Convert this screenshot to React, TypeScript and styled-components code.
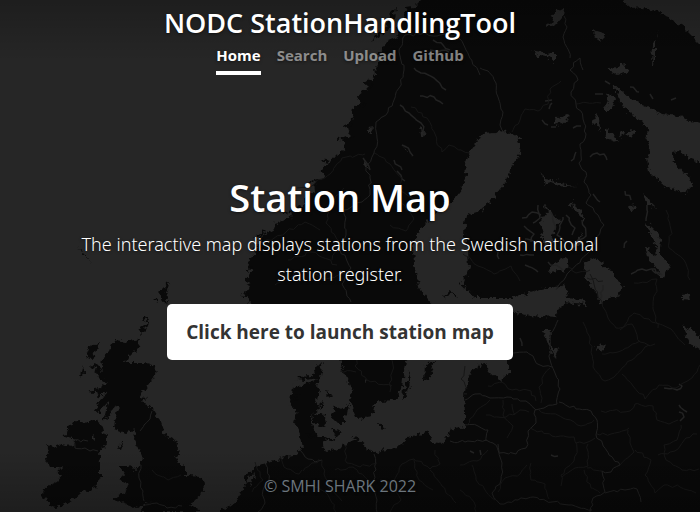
import React from "react";
import styled, { createGlobalStyle } from "styled-components";

const GlobalStyle = createGlobalStyle`
  *, *::before, *::after { box-sizing: border-box; }
  body {
    margin: 0;
    background: #262626;
    color: #fff;
    font-family: "Segoe UI", "Open Sans", "Noto Sans", sans-serif;
  }
`;

const Page = styled.div`
  position: relative;
  min-height: 100vh;
  display: flex;
  overflow: hidden;
  text-align: center;
  text-shadow: 0 1px 3px rgba(0, 0, 0, 0.5);
`;

const Backdrop = styled.svg`
  position: absolute;
  inset: 0;
  width: 100%;
  height: 100%;
`;

const Cover = styled.div`
  position: relative;
  flex: 1;
  display: flex;
  flex-direction: column;
  justify-content: space-between;
  align-items: center;
  padding: 4px 36px 14px 16px;
`;

const Header = styled.header`
  display: flex;
  flex-direction: column;
  align-items: center;
`;

const Brand = styled.h3`
  margin: 0;
  font-size: 27px;
  font-weight: 600;
  line-height: 38px;
`;

const Nav = styled.nav`
  display: flex;
  gap: 16px;
`;

const NavLink = styled.a<{ $active?: boolean }>`
  padding: 1px 0 4px;
  border-bottom: 4px solid ${(p) => (p.$active ? "#fff" : "transparent")};
  color: ${(p) => (p.$active ? "#fff" : "rgba(255, 255, 255, 0.5)")};
  font-size: 15px;
  font-weight: 700;
  line-height: 24px;
  text-decoration: none;
`;

const Main = styled.main`
  max-width: 560px;
  padding-bottom: 16px;
`;

const Title = styled.h1`
  margin: 0 0 8px;
  font-size: 38px;
  font-weight: 600;
  line-height: 48px;
`;

const Lead = styled.p`
  margin: 0 0 15px;
  font-family: "Segoe UI", "Noto Sans", sans-serif;
  font-size: 18px;
  font-weight: 300;
  line-height: 30px;
`;

const LaunchLink = styled.a`
  display: inline-block;
  padding: 13px 19px;
  border-radius: 5px;
  background: #fff;
  color: #333;
  font-size: 19px;
  font-weight: 700;
  line-height: 30px;
  text-decoration: none;
  text-shadow: none;
`;

const Footer = styled.footer`
  color: #6c757d;
  font-size: 16px;
  line-height: 24px;
`;

const landShapes = [
  // Scandinavia, Russia and the continent
  "M421 0L414 7 406 8 403 18 396 29 398 36 388 40 385 48 378 53 382 60 374 68 375 76 365 83 366 90 358 96 360 103 351 111 354 118 347 124 350 134 343 140 346 149 336 156 331 162 321 168 324 176 314 183 315 192 304 197 304 205 293 210 290 218 276 223 274 229 260 237 263 243 251 248 256 255 246 262 252 270 246 280 250 287 246 295 252 306 258 330 272 346 288 340 304 316 320 308 330 334 340 360 346 378 353 392 349 400 355 415 358 419 371 417 374 409 373 405 380 401 395 400 402 388 404 370 408 350 430 335 430 303 420 290 414 265 413 245 420 230 436 214 452 201 462 188 466 175 465 163 472 148 482 134 495 133 504 130 518 137 521 145 520 154 512 166 506 182 494 196 486 207 476 212 466 215 464 234 468 250 469 268 463 284 475 298 511 298 530 293 548 288 562 286 566 284 568 297 584 300 587 305 574 304 564 303 560 307 555 318 530 316 512 312 490 326 490 345 509 352 509 372 499 381 490 373 484 362 472 370 467 380 464 396 465 412 465 427 455 429 450 430 448 438 440 443 433 442 428 432 408 438 402 445 375 453 368 449 358 440 344 445 331 452 321 447 328 437 317 437 313 428 311 416 320 408 316 399 321 391 317 386 320 377 323 361 316 368 311 376 299 377 292 385 290 403 297 411 294 422 300 435 302 448 295 456 286 457 275 461 263 464 254 468 246 474 243 490 235 502 221 512H700V0Z",
  // Great Britain
  "M115 340L125 342 140 339 138 347 128 357 125 363 145 363 156 366 155 375 148 385 140 397 146 398 142 402 147 404 154 410 159 418 165 435 175 440 180 455 174 457 185 468 185 478 190 475 200 476 205 484 202 494 195 500 189 507 200 510 200 512 141 512 144 506 150 501 137 508 126 504 112 499 117 495 126 493 129 484 119 479 125 475 120 467 127 467 134 469 141 465 143 457 139 448 134 439 136 429 125 433 114 429 115 421 119 408 113 405 108 420 104 419 108 402 98 413 94 411 103 397 108 390 97 397 96 391 108 383 98 377 95 369 91 365 95 363 102 370 103 358 109 351 112 344Z",
  // Ireland
  "M46 444L52 448 61 444 72 446 76 440 66 437 65 432 70 425 80 420 87 422 95 421 101 425 103 432 107 437 105 447 99 451 100 465 100 478 95 488 90 490 80 494 69 502 57 507 51 506 48 502 42 496 43 489 50 485 57 482 63 475 55 475 61 468 50 468 46 459 48 452Z",
  // Hebrides, Orkney, Shetland, Man and Faroes
  "M98 343L89 348 86 356 92 359 95 352ZM83 364L80 376 84 374ZM170 280L163 288 159 292 164 304 168 289ZM148 324L137 330 141 334 146 329ZM123 441L117 448 120 449ZM78 247L88 259 92 264 84 256ZM90 390L99 388 92 394Z",
  // Lofoten
  "M396 8L389 15 388 24 377 34 372 40 379 36 392 26Z",
  // Danish islands, Bornholm, Oland and Gotland
  "M312 415L324 413 326 424 320 427 313 421ZM349 404L348 414 343 418 346 424 338 424 331 417 335 406 341 409ZM331 428L344 432 336 437ZM378 421L385 427 382 429 378 425ZM411 371L401 398 404 399 410 383ZM435 360L425 365 424 381 429 380 432 371Z",
];

const waterShapes = [
  // Barents Sea
  "M622 0L631 8 642 7 653 11 663 14 672 20 684 28 691 35 700 44 712 52V-10H622Z",
  // White Sea
  "M613 85L621 90 630 98 643 105 654 109 662 114 679 116 690 121 712 124V166L690 159 680 151 672 152 674 161 681 171 689 176 692 186 685 194 675 190 662 184 656 177 649 172 647 160 650 148 646 139 649 132 642 122 632 115 623 106Z",
  // Kola and Karelian lakes
  "M606 93L616 98 612 110 602 110 608 103ZM597 112L593 123 600 131 599 118ZM605 129L612 133 619 143 606 138ZM621 131L625 130 624 135 619 137ZM632 130L635 132 631 137 626 134Z",
  // Inari and Lapland lakes
  "M564 8L563 17 555 26 546 28 552 19 554 13ZM532 51L547 54 555 52 555 62 548 57 539 56ZM593 30L606 34 598 42ZM659 29L653 45 652 66 655 60 655 43ZM606 68L626 64 628 71 618 75 611 72ZM555 120L568 114 571 117 561 123 555 125Z",
  "M542 172L546 179 558 181 565 185 578 186 562 187 551 182 544 184ZM540 222L547 213 544 203 552 214 560 220 555 229 551 241 545 247ZM570 205L585 222 582 211 575 204ZM554 262L566 257 568 269 560 271 548 272ZM582 232L580 247 572 249 575 242ZM570 202L573 200 574 209 568 207ZM642 193L650 200 655 208 648 205ZM628 206L637 205 632 212Z",
  // Ladoga
  "M595 257L601 262 611 271 619 282 623 287 618 297 609 298 602 305 599 304 598 294 588 283 585 272 584 263Z",
  // Onega
  "M645 222L654 230 661 239 660 250 664 259 670 265 664 278 660 278 658 267 649 262 645 245 651 253 657 257 655 245Z",
  // Peipus, Ilmen and Rybinsk
  "M543 330L551 330 550 342 553 348 559 350 555 358 550 350ZM597 344L606 346 602 351 595 349ZM682 325L694 331 700 338V350L690 343ZM681 295L690 294 691 300 681 299Z",
  // Norwegian and Swedish lakes
  "M367 129L374 128 370 134ZM420 126L426 136 421 137ZM402 144L411 154 405 149ZM364 159L369 172 364 165Z",
  "M291 383L297 379 306 380 317 378 314 381 304 384 294 389ZM367 379L365 384 364 381ZM248 477L256 471 252 482 245 485ZM94 435L97 438 93 441Z",
];

const nationalBorders = [
  "M480 68L488 71 496 83 498 97 503 112 500 125 505 133",
  "M578 80L571 92 576 104 583 119 586 134 580 144 581 155 579 163 586 172 584 182 591 195 586 203 598 215 604 225 595 240 587 254 567 274 556 290",
  "M578 80L570 70 580 58 583 70M570 58L563 37 567 27 564 16",
  "M480 75L466 50 459 38 447 33 437 36 427 34 405 35 399 52 404 70 399 88 388 112 376 122 377 138 374 153 366 168 370 178 370 195 362 202 344 210 346 235 340 249 351 268 342 284 351 302",
  "M558 320L550 337 550 360 555 373 560 389 557 404 544 408 535 410 536 423 528 431 526 448 516 454 499 453 493 443 486 440 465 442 450 441",
  "M465 425L478 426 488 430 486 441M465 400L475 394 490 398 507 397 513 399 526 401 536 410M559 402L576 409 591 411 597 420 596 435 609 455 620 465 611 472 602 471 605 492 593 498 590 512",
  "M513 353L527 352 540 365 552 367M498 444L502 463 501 480 492 493 500 504 518 500 533 497 552 502 569 505 592 510M605 493L625 490 637 489 641 502",
  "M374 454L376 470 371 484 377 500 377 512M300 450L308 459 315 462 322 460M266 465L269 480 263 490 265 503 258 512",
  "M152 411L150 419 144 425 140 431M88 441L73 440 75 448 85 448 90 451 98 451M141 465L139 478 143 491 144 501M145 505L157 503 167 508 182 506",
];

const regionalBorders = [
  "M576 104L601 103M512 132L520 120 525 109 538 111 548 104 550 89 561 81",
  "M411 107L427 118 442 152 449 145 461 150 470 153M374 153L390 164 402 178 401 191 416 202M365 154L342 158 330 174 312 186 297 188M344 188L332 202 326 223 339 241 332 260",
  "M390 225L406 231 414 219 401 203M264 242L286 232 305 222 320 230M275 285L302 270 326 279 347 271M288 260L312 252 337 265",
  "M488 386L502 382 512 390 531 391 536 401M486 415L506 417 520 410 529 412M490 400L477 410 467 425M503 400L503 415 513 426 507 438M515 415L512 404M539 410L563 418 581 426 594 420",
  "M550 368L539 387 541 403M583 322L590 340 593 367 605 381 614 377 622 368 632 360 645 347 655 344M622 374L633 386 645 399 659 385 676 388 689 380 700 365M601 411L630 411 635 404 653 406 657 420 669 424 678 420M628 430L630 443 634 452 620 465M597 434L611 434 629 428M635 450L651 460 645 475 655 493 664 485 680 487 696 493",
  "M658 455L675 451 686 438 697 434M681 425L677 440 664 445 666 460 682 470 699 469M530 428L552 436 574 437 577 448 574 461 561 475 561 486M531 463L531 480 545 484 549 499M498 492L505 478 520 474 527 465M587 468L602 471M584 470L591 488 600 493",
  "M576 443L588 442 595 438M588 444L588 466 575 468 562 477M460 465L477 461 488 450M472 465L476 480 485 490 495 500M460 490L474 502 476 512",
  "M590 274L608 318 616 328 632 324 640 342 650 346M587 278L603 281M634 283L657 279 653 309 658 328M666 210L671 230 669 248 684 260 690 280",
  "M620 330L634 313 649 319 671 329 685 345",
  "M255 462L263 480 252 492M280 456L284 467 299 474 302 470M303 471L319 459M322 460L324 474 330 489 342 501M345 445L347 463 360 467 377 463M312 484L328 495 336 512M380 480L393 482 402 464 414 459 430 469 440 464 435 450M430 470L442 486 456 503M414 460L419 480 433 490M392 482L401 500 390 512M335 470L353 467 372 482M360 348L355 366 367 380 392 386M356 372L340 371M380 340L393 365 390 392M465 366L461 379 467 389",
  "M152 470L168 480 181 475",
  "M590 270L576 273 568 267M463 254L478 266 494 274 511 266 520 281M602 354L618 352 640 341",
];

const fineLakes = [
  "M414 68L421 73 434 78 446 90M420 96L434 97 443 104M400 105L409 113 421 123 426 134M402 145L410 152 413 156M433 40L443 45 450 50M430 50L449 52M397 171L405 181M394 160L402 170M363 158L370 170",
  "M522 218L532 212 541 215M525 239L535 243M524 226L534 234 531 242M538 205L540 218 533 223M548 242L561 241M551 212L555 230M563 217L557 235 565 242M548 262L563 270M566 215L575 228 572 235M582 220L586 236 577 243M520 255L534 255M498 252L499 259M525 265L538 272",
  "M545 101L552 100M549 109L552 103M551 127L556 127M542 120L548 125M573 128L581 126M571 161L576 152M590 157L597 153 604 154 607 160M593 194L600 202M625 191L631 200M610 84L605 81M595 94L603 94M650 94L653 99M671 100L676 98M630 87L639 92M631 274L642 269 655 269 659 275M652 270L662 275M646 221L647 205",
  "M664 388L677 390 682 386 679 384M679 405L687 412M679 412L684 417 680 421M551 455L558 456M470 451L474 453M480 450L481 455M520 338L522 346M627 241L624 248M603 285L600 300",
];

const coastlineIslands = "M393 56L388 59M373 85L368 88M365 104L357 108M353 136L341 140M340 137L337 140M351 124L343 127M329 162L321 160M316 179L307 185M293 211L283 213M266 231L256 238M253 267L246 270M248 294L242 297M144 317L149 324M154 299L158 302M164 303L169 300M445 298L451 291 458 297M474 291L480 295M460 284L464 288M300 393L294 400M325 438L336 440M353 437L359 440M327 391L331 398M323 403L319 406M315 437L306 434";

// Splits each straight run into short, gently wavering segments.
function meander(path: string): string {
  let seed = 11;
  const wobble = () => {
    seed = (seed * 16807) % 2147483647;
    return (seed / 2147483647 - 0.5) * 3;
  };
  return path
    .split("M")
    .filter(Boolean)
    .map((line) => {
      const n = line.replace(/L/g, " ").trim().split(/\s+/).map(Number);
      let out = `M${n[0]} ${n[1]}`;
      for (let i = 2; i < n.length; i += 2) {
        const dx = n[i] - n[i - 2];
        const dy = n[i + 1] - n[i - 1];
        const steps = Math.max(1, Math.round(Math.hypot(dx, dy) / 4));
        for (let k = 1; k < steps; k++) {
          const x = n[i - 2] + (dx * k) / steps + wobble();
          const y = n[i - 1] + (dy * k) / steps + wobble();
          out += `L${x.toFixed(1)} ${y.toFixed(1)}`;
        }
        out += `L${n[i]} ${n[i + 1]}`;
      }
      return out;
    })
    .join("");
}

const nationalLines = meander(nationalBorders.join(""));
const regionalLines = meander(regionalBorders.join(""));
const lakeLines = meander(fineLakes.join(""));

function EuropeMap() {
  return (
    <Backdrop viewBox="0 0 700 512" preserveAspectRatio="xMidYMid slice" aria-hidden="true">
      <defs>
        <filter
          id="coast"
          x="-10"
          y="-10"
          width="720"
          height="532"
          filterUnits="userSpaceOnUse"
          colorInterpolationFilters="sRGB"
        >
          <feTurbulence type="fractalNoise" baseFrequency="0.2" numOctaves="3" seed="7" result="noise" />
          <feDisplacementMap in="SourceGraphic" in2="noise" scale="8" xChannelSelector="R" yChannelSelector="G" />
          <feGaussianBlur stdDeviation="0.4" />
        </filter>
        <linearGradient id="shade" x1="0" y1="0" x2="0" y2="1">
          <stop offset="0" stopColor="#000" stopOpacity="0.22" />
          <stop offset="0.12" stopColor="#000" stopOpacity="0" />
          <stop offset="0.88" stopColor="#000" stopOpacity="0" />
          <stop offset="1" stopColor="#000" stopOpacity="0.22" />
        </linearGradient>
      </defs>
      <rect width="700" height="512" fill="#262626" />
      <g filter="url(#coast)">
        <rect x="-10" y="-10" width="720" height="532" fill="#262626" />
        <path d={landShapes.join("")} fill="#090909" />
        <path d="M421 1V-10H622V1ZM699 44H712V524H221V511H699Z" fill="#090909" />
        <path d={coastlineIslands} fill="none" stroke="#090909" strokeWidth="2" />
        <path d={waterShapes.join("")} fill="#262626" />
      </g>
      <g fill="none" strokeLinejoin="round">
        <path d={lakeLines} stroke="#222" strokeWidth="1.5" />
        <path d={nationalLines} stroke="#202020" strokeWidth="1" />
        <path d={regionalLines} stroke="#161616" strokeWidth="1" />
      </g>
      <rect width="700" height="512" fill="url(#shade)" />
    </Backdrop>
  );
}

const links = ["Home", "Search", "Upload", "Github"];

export default function App() {
  return (
    <>
      <GlobalStyle />
      <Page>
        <EuropeMap />
        <Cover>
          <Header>
            <Brand>NODC StationHandlingTool</Brand>
            <Nav>
              {links.map((name, i) => (
                <NavLink key={name} href="#" $active={i === 0}>
                  {name}
                </NavLink>
              ))}
            </Nav>
          </Header>
          <Main>
            <Title>Station Map</Title>
            <Lead>The interactive map displays stations from the Swedish national station register.</Lead>
            <LaunchLink href="#">Click here to launch station map</LaunchLink>
          </Main>
          <Footer>© SMHI SHARK 2022</Footer>
        </Cover>
      </Page>
    </>
  );
}
